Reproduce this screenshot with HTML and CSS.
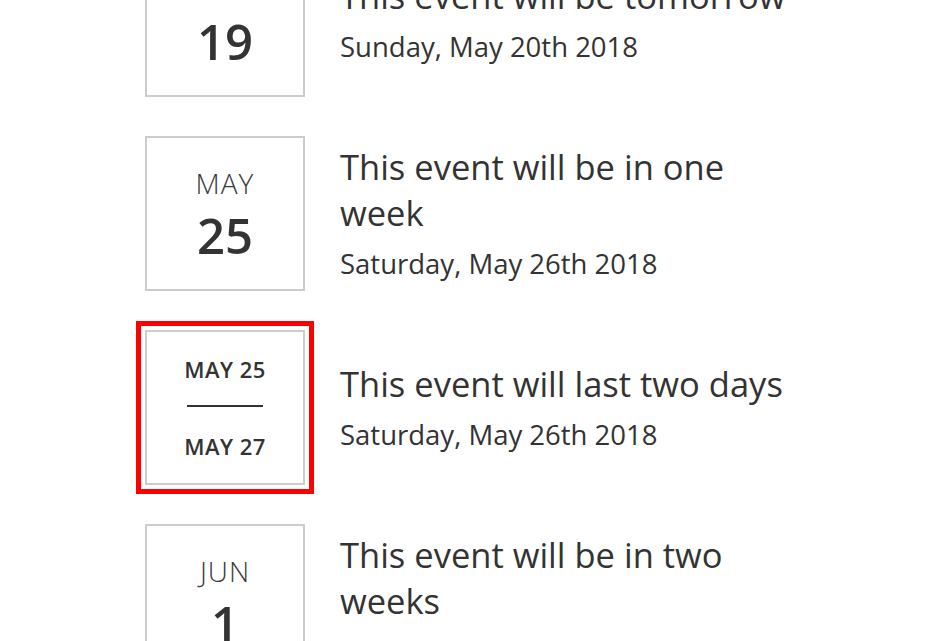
FILE: index.html
```html
<!DOCTYPE html>
<html>
<head>
<meta charset="utf-8">
<link rel="stylesheet" href="styles.css">
</head>
<body>
<ul class="events">
  <li class="event">
    <div class="date">
      <span class="month">MAY</span>
      <span class="day">19</span>
    </div>
    <div class="info">
      <div class="title">This event will be tomorrow</div>
      <div class="when">Sunday, May 20th 2018</div>
    </div>
  </li>
  <li class="event">
    <div class="date">
      <span class="month">MAY</span>
      <span class="day">25</span>
    </div>
    <div class="info">
      <div class="title">This event will be in one week</div>
      <div class="when">Saturday, May 26th 2018</div>
    </div>
  </li>
  <li class="event">
    <div class="date range selected">
      <span class="range-day">MAY 25</span>
      <span class="range-sep"></span>
      <span class="range-day">MAY 27</span>
    </div>
    <div class="info">
      <div class="title">This event will last two days</div>
      <div class="when">Saturday, May 26th 2018</div>
    </div>
  </li>
  <li class="event">
    <div class="date">
      <span class="month">JUN</span>
      <span class="day">1</span>
    </div>
    <div class="info">
      <div class="title">This event will be in two weeks</div>
      <div class="when">Saturday, June 2nd 2018</div>
    </div>
  </li>
</ul>
</body>
</html>
```
FILE: styles.css
```css
html, body {
  margin: 0;
  padding: 0;
  background: #fff;
  overflow: hidden;
}
body {
  font-family: "Open Sans", "Noto Sans", sans-serif;
  color: #333;
}
.events {
  list-style: none;
  margin: -58px 0 0 0;
  padding: 0 0 0 145px;
  display: flex;
  flex-direction: column;
  gap: 39px;
}
.event {
  display: flex;
  align-items: center;
  gap: 35px;
}
.date {
  box-sizing: border-box;
  flex: none;
  width: 160px;
  height: 155px;
  border: 2px solid #cccccc;
  display: flex;
  flex-direction: column;
  align-items: center;
  justify-content: center;
}
.month {
  font-size: 28px;
  font-weight: 300;
  line-height: 36px;
  letter-spacing: 1px;
  color: #3a3a3a;
}
.day {
  font-size: 49px;
  font-weight: 600;
  line-height: 56px;
  margin-top: 6px;
}
.range-day {
  font-size: 22px;
  font-weight: 600;
  line-height: 28px;
  letter-spacing: 0.5px;
}
.range-sep {
  width: 76px;
  height: 2px;
  background: #333;
  margin: 22px 0 25px;
}
.selected {
  outline: 5px solid #ff0000;
  outline-offset: 4px;
}
.info {
  width: 458px;
  padding-top: 7px;
}
.title {
  font-size: 34.5px;
  line-height: 46px;
  font-weight: 400;
}
.when {
  font-size: 27.5px;
  line-height: 55px;
  font-weight: 400;
}
```
